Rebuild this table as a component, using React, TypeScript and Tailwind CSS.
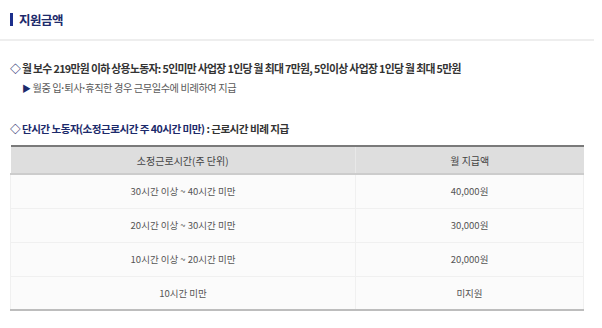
const ROWS = [
  { hours: '30시간 이상 ~ 40시간 미만', amount: '40,000원' },
  { hours: '20시간 이상 ~ 30시간 미만', amount: '30,000원' },
  { hours: '10시간 이상 ~ 20시간 미만', amount: '20,000원' },
  { hours: '10시간 미만', amount: '미지원' },
];

const Dot = () => <span className="font-['Liberation_Sans'] font-bold">·</span>;

export default function App() {
  return (
    <div
      className="w-[602px] h-[328px] bg-white overflow-hidden"
      style={{ fontFamily: '"Noto Sans CJK KR", "Noto Sans", sans-serif' }}
    >
      {/* Section title */}
      <div className="flex items-start gap-[6px] pl-[10px] pt-[13px] h-[39px]">
        <span className="w-[3px] h-[13px] bg-[#1c2f8c]" />
        <h2 className="text-[12.5px] font-bold text-[#1c2a6b] tracking-[-0.04em] leading-[13px]">지원금액</h2>
      </div>
      <div className="h-[2px] w-[594px] bg-[#eeeeee]" />

      {/* Regular workers */}
      <div className="pl-[10px] pt-[20px]">
        <p className="text-[10.8px] font-bold text-[#333] tracking-[-0.06em] leading-[14px]">
          <span className="text-[#1c2a6b]">◇</span> 월 보수 219만원 이하 상용노동자: 5인미만 사업장 1인당 월 최대 7만원, 5인이상 사업장 1인당 월 최대 5만원
        </p>
        <p className="mt-[6px] pl-[12px] text-[10.2px] text-[#5a5a5a] tracking-[-0.04em] leading-[14px]">
          <span className="text-[#1c2a6b] text-[9px]">▶</span> 월중 입<Dot />퇴사<Dot />휴직한 경우 근무일수에 비례하여 지급
        </p>
      </div>

      {/* Part-time workers */}
      <div className="pl-[10px] pt-[26px]">
        <p className="text-[10.6px] font-bold text-[#333] tracking-[-0.05em] leading-[14px]">
          <span className="text-[#1c2a6b]">◇ 단시간 노동자(소정근로시간 주 40시간 미만)</span> : 근로시간 비례 지급
        </p>
      </div>

      {/* Table */}
      <div className="pl-[10px] pt-[9px]">
        <table className="w-[574px] border-collapse text-[9.5px] text-[#555]">
          <thead>
            <tr className="bg-[#dedede] border-t-2 border-t-[#7a7a7a] border-b-2 border-b-[#cccccc]">
              <th className="w-[345px] h-[28px] text-[10px] font-normal text-[#444] border-r border-r-[#e8e8e8]">
                소정근로시간(주 단위)
              </th>
              <th className="h-[28px] text-[10px] font-normal text-[#444]">월 지급액</th>
            </tr>
          </thead>
          <tbody>
            {ROWS.map((r, i) => (
              <tr
                key={r.hours}
                className={`bg-[#fbfbfb] ${i === ROWS.length - 1 ? 'border-b-2 border-b-[#bdbdbd]' : 'border-b border-b-[#f0f0f0]'}`}
              >
                <td className="h-[34px] text-center border-l border-l-[#f0f0f0] border-r border-r-[#f0f0f0]">{r.hours}</td>
                <td className="h-[34px] text-center border-r border-r-[#f0f0f0]">{r.amount}</td>
              </tr>
            ))}
          </tbody>
        </table>
      </div>
    </div>
  );
}
